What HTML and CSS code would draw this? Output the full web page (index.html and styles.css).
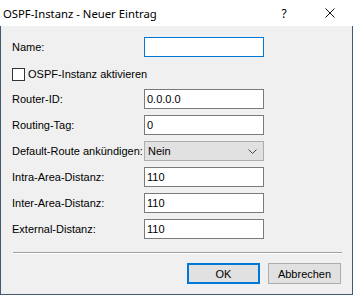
FILE: index.html
```html
<!DOCTYPE html>
<html lang="de">
<head>
    <meta charset="UTF-8">
    <title>OSPF-Instanz - Neuer Eintrag</title>
    <link rel="stylesheet" href="styles.css">
</head>
<body>
    <div class="dialog">
        <div class="title-bar">
            <span class="title">OSPF-Instanz - Neuer Eintrag</span>
            <span class="help-btn">?</span>
            <span class="close-btn">
                <svg width="10" height="10" viewBox="0 0 10 10">
                    <path d="M0.5 0.5 L9.5 9.5 M9.5 0.5 L0.5 9.5" stroke="#111" stroke-width="1" fill="none"/>
                </svg>
            </span>
        </div>

        <div class="dialog-body">
            <form class="entry-form">
                <label class="field-label" for="name">Name:</label>
                <input class="field-input focused" type="text" id="name">

                <label class="check-row">
                    <span class="check-box"></span>
                    <span>OSPF-Instanz aktivieren</span>
                </label>

                <label class="field-label" for="routerid">Router-ID:</label>
                <input class="field-input" type="text" id="routerid" value="0.0.0.0">

                <label class="field-label" for="routingtag">Routing-Tag:</label>
                <input class="field-input" type="text" id="routingtag" value="0">

                <label class="field-label" for="defaultroute">Default-Route ankündigen:</label>
                <div class="field-select" id="defaultroute">
                    <span>Nein</span>
                    <svg width="9" height="5" viewBox="0 0 9 5">
                        <path d="M0.5 0.5 L4.5 4.5 L8.5 0.5" stroke="#444" stroke-width="1" fill="none"/>
                    </svg>
                </div>

                <label class="field-label" for="intra">Intra-Area-Distanz:</label>
                <input class="field-input" type="text" id="intra" value="110">

                <label class="field-label" for="inter">Inter-Area-Distanz:</label>
                <input class="field-input" type="text" id="inter" value="110">

                <label class="field-label" for="external">External-Distanz:</label>
                <input class="field-input" type="text" id="external" value="110">
            </form>

            <div class="separator"></div>

            <div class="button-row">
                <button class="dlg-btn default">OK</button>
                <button class="dlg-btn">Abbrechen</button>
            </div>
        </div>
    </div>
</body>
</html>
```

FILE: styles.css
```css
body {
    margin: 0;
    font-family: "Liberation Sans", Arial, sans-serif;
    font-size: 11px;
    color: #000;
    background: #f0f0f0;
}
.dialog {
    width: 353px;
    height: 295px;
    box-sizing: border-box;
    border: 1px solid #435a71;
    border-top: none;
    background: #f0f0f0;
    display: flex;
    flex-direction: column;
}
.title-bar {
    height: 26px;
    background: #fff;
    display: flex;
    align-items: center;
    padding-left: 3px;
    margin: 0 -1px;
    font-family: "Noto Sans", sans-serif;
    font-size: 11.3px;
}
.title {
    flex: 1;
}
.help-btn {
    width: 46px;
    text-align: center;
    font-size: 12px;
}
.close-btn {
    width: 46px;
    display: flex;
    justify-content: center;
}
.dialog-body {
    padding: 11px 10px 0 11px;
}
.entry-form {
    display: grid;
    grid-template-columns: 132px 120px;
    grid-auto-rows: 20px;
    row-gap: 6px;
}
.field-label {
    display: flex;
    align-items: center;
    white-space: nowrap;
}
.field-input {
    box-sizing: border-box;
    width: 120px;
    height: 20px;
    margin: 0;
    padding: 0 2px;
    border: 1px solid #7a7a7a;
    background: #fff;
    font-family: inherit;
    font-size: 11px;
    color: #000;
    outline: none;
}
.field-input.focused {
    border-color: #0078d7;
}
.check-row {
    grid-column: 1 / 3;
    display: flex;
    align-items: center;
    gap: 3px;
    font-size: 11px;
    padding-top: 2px;
}
.check-box {
    width: 11px;
    height: 11px;
    border: 1px solid #333;
    background: #fff;
}
.field-select {
    box-sizing: border-box;
    width: 120px;
    height: 20px;
    border: 1px solid #adadad;
    background: #e1e1e1;
    display: flex;
    align-items: center;
    justify-content: space-between;
    padding: 0 6px 0 3px;
}
.separator {
    margin-top: 13px;
    border-top: 1px solid #a0a0a0;
    border-bottom: 1px solid #fff;
    margin-left: 1px;
}
.button-row {
    display: flex;
    justify-content: flex-end;
    gap: 8px;
    margin-top: 9px;
    padding-right: 1px;
}
.dlg-btn {
    box-sizing: border-box;
    width: 73px;
    height: 21px;
    background: #e1e1e1;
    border: 1px solid #adadad;
    font-family: inherit;
    font-size: 11px;
    color: #000;
    padding: 0;
}
.dlg-btn.default {
    border: 2px solid #0078d7;
}
```
